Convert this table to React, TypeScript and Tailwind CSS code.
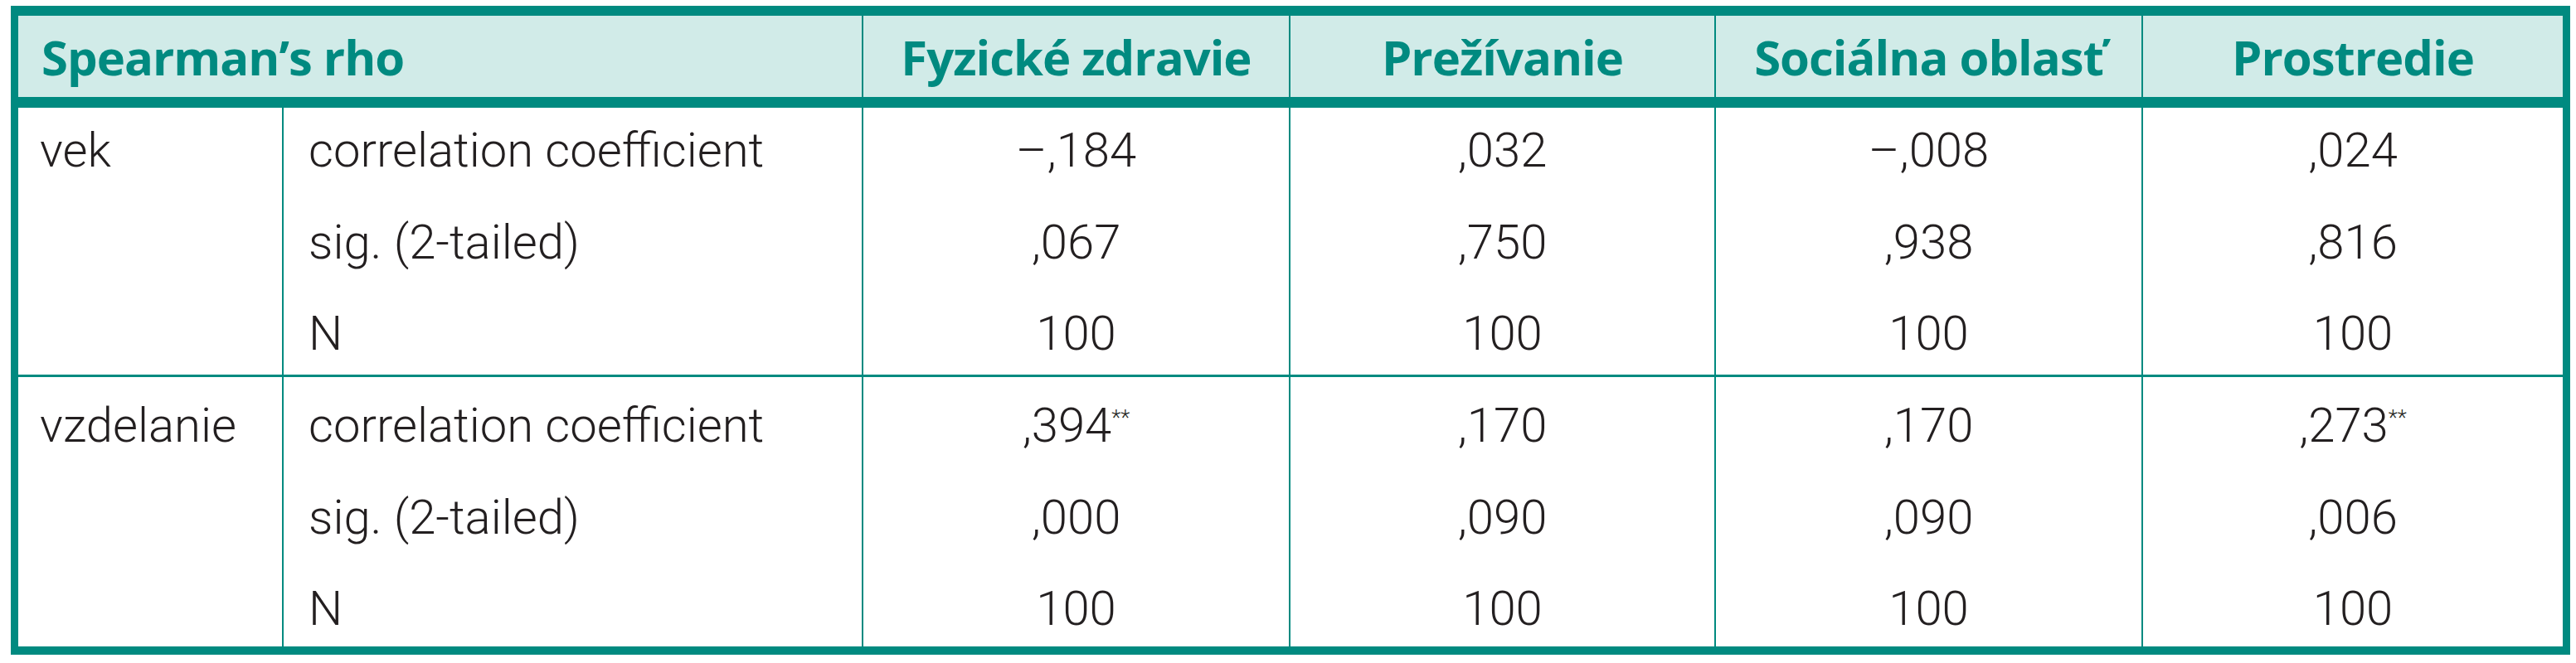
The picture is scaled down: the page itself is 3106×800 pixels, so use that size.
type Line = { name: string; values: string[] };
type Group = { label: string; rowsClass: string; firstPad: string; lines: Line[] };

const groups: Group[] = [
  {
    label: "vek",
    rowsClass: "grid-rows-[111px_110px_101px]",
    firstPad: "pt-0",
    lines: [
      { name: "correlation coefficient", values: ["–,184", ",032", "–,008", ",024"] },
      { name: "sig. (2-tailed)", values: [",067", ",750", ",938", ",816"] },
      { name: "N", values: ["100", "100", "100", "100"] },
    ],
  },
  {
    label: "vzdelanie",
    rowsClass: "grid-rows-[118px_110px_97px]",
    firstPad: "pt-[7px]",
    lines: [
      { name: "correlation coefficient", values: [",394**", ",170", ",170", ",273**"] },
      { name: "sig. (2-tailed)", values: [",000", ",090", ",090", ",006"] },
      { name: "N", values: ["100", "100", "100", "100"] },
    ],
  },
];

const heads = ["Fyzické zdravie", "Prežívanie", "Sociálna oblasť", "Prostredie"];
const headWidths = ["w-[515px]", "w-[513px]", "w-[515px]", "w-[508px]"];

function Value({ v }: { v: string }) {
  if (v.endsWith("**")) {
    return (
      <>
        {v.slice(0, -2)}
        <span className="align-super text-[26px] leading-none">**</span>
      </>
    );
  }
  return <>{v}</>;
}

export default function App() {
  return (
    <div className="w-[3106px] h-[800px] bg-white pt-[7px] pl-[13px]">
      <div className="w-[3086px] border-[#008a80] border-t-[12px] border-b-[10px] border-l-[9px] border-r-[9px]">
        {/* header */}
        <div className="flex h-[111px] bg-[#d1ebe8] border-b-[13px] border-[#008a80] font-['Open_Sans',sans-serif] font-bold text-[58px] text-[#008a80] tracking-[-1px]">
          <div className="w-[1017px] flex items-center pl-[28px]">Spearman’s rho</div>
          {heads.map((h, i) => (
            <div
              key={h}
              className={`${headWidths[i]} flex items-center justify-center border-l-2 border-[#008a80]`}
            >
              {h}
            </div>
          ))}
        </div>

        {/* body */}
        {groups.map((g, gi) => (
          <div
            key={g.label}
            className={`grid grid-cols-[318px_699px_515px_513px_515px_508px] ${g.rowsClass} ${
              gi > 0 ? "border-t-[3px] border-[#008a80]" : ""
            } font-['Roboto',sans-serif] font-light text-[58px] leading-[102px] text-[#231f20]`}
          >
            <div className={`row-span-3 pl-[26px] ${g.firstPad}`}>{g.label}</div>
            {g.lines.map((l, li) => (
              <div key={l.name} className="contents">
                <div className={`border-l-2 border-[#008a80] pl-[30px] ${li === 0 ? g.firstPad : ""}`}>
                  {l.name}
                </div>
                {l.values.map((v, vi) => (
                  <div
                    key={vi}
                    className={`border-l-2 border-[#008a80] text-center ${li === 0 ? g.firstPad : ""}`}
                  >
                    <Value v={v} />
                  </div>
                ))}
              </div>
            ))}
          </div>
        ))}
      </div>
    </div>
  );
}
